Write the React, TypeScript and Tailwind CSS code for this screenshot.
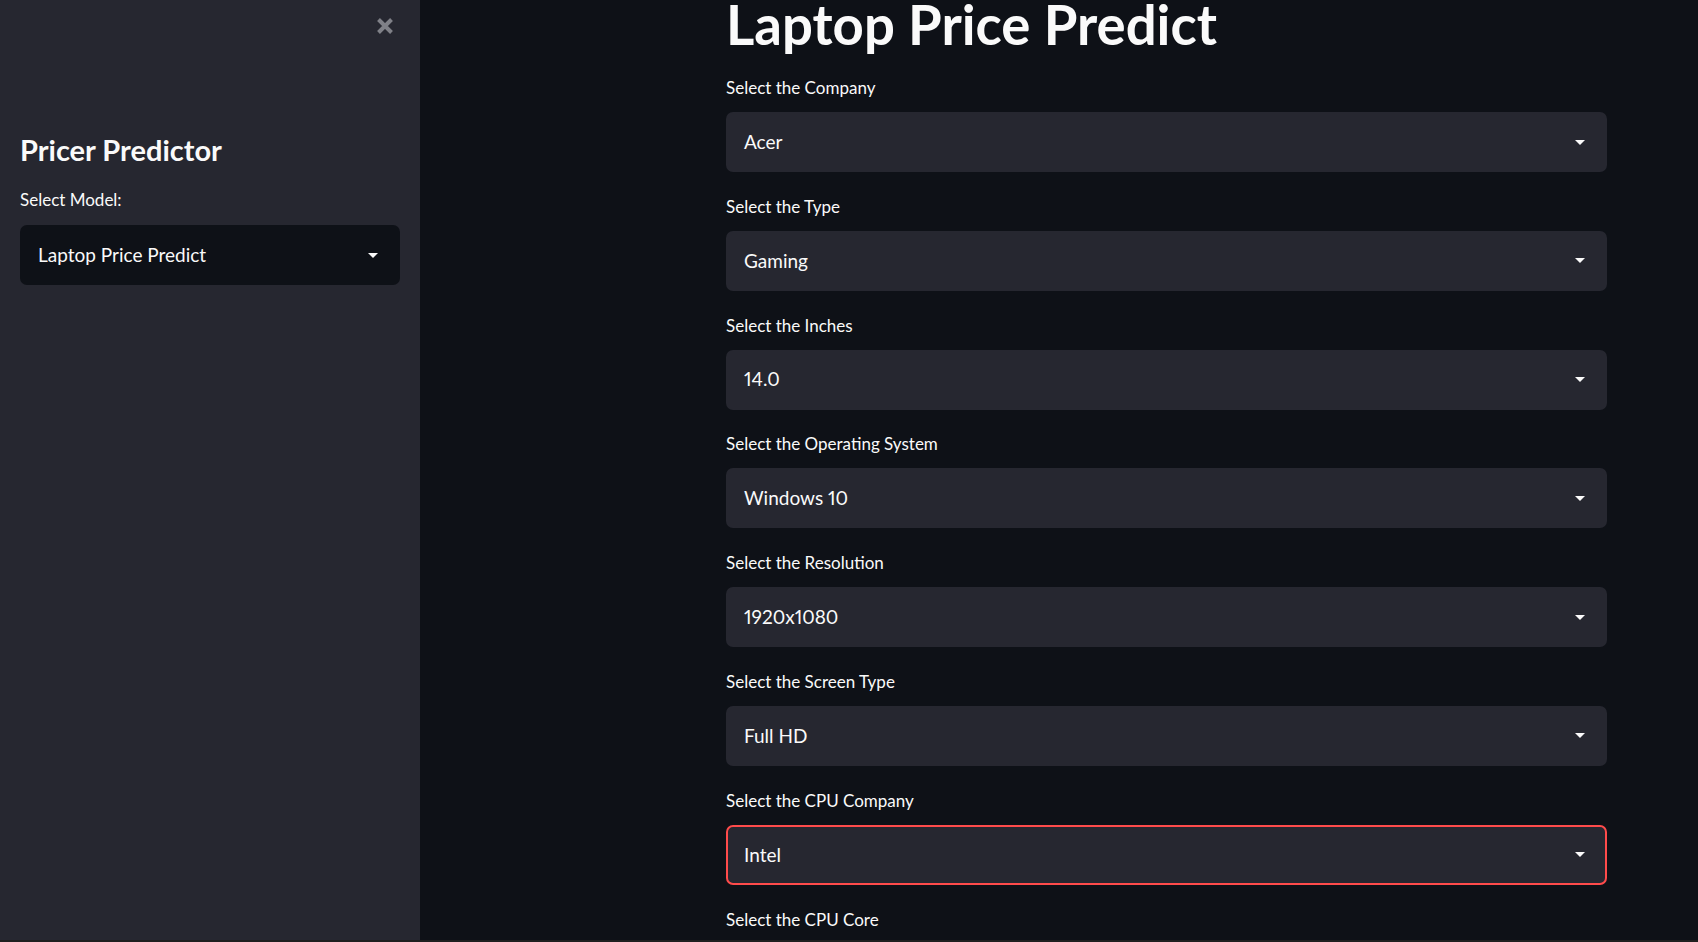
import React from 'react';

const font = { fontFamily: 'Lato, "Noto Sans", sans-serif' };

const fields = [
  { label: 'Select the Company', value: 'Acer' },
  { label: 'Select the Type', value: 'Gaming' },
  { label: 'Select the Inches', value: '14.0' },
  { label: 'Select the Operating System', value: 'Windows 10' },
  { label: 'Select the Resolution', value: '1920x1080' },
  { label: 'Select the Screen Type', value: 'Full HD' },
  { label: 'Select the CPU Company', value: 'Intel', focused: true },
  { label: 'Select the CPU Core', value: 'i5' },
];

const Caret = () => (
  <svg width="10" height="5" viewBox="0 0 10 5" className="shrink-0">
    <path d="M0 0h10L5 5z" fill="#fafafa" />
  </svg>
);

const Select: React.FC<{ value: string; dark?: boolean; focused?: boolean }> = ({ value, dark, focused }) => (
  <div
    className={`h-[60px] rounded-[7px] flex items-center justify-between text-[19px] text-[#fafafa] proportional-nums ${
      dark ? 'bg-[#0e1117]' : 'bg-[#262730]'
    } ${focused ? 'border-2 border-[#ff4b4b] pl-[16px] pr-[20px]' : 'pl-[18px] pr-[22px]'}`}
  >
    <span>{value}</span>
    <Caret />
  </div>
);

export default function App() {
  return (
    <div className="w-[1698px] h-[942px] overflow-hidden flex flex-col bg-[#0e1117]" style={font}>
      <div className="flex h-[940px] overflow-hidden">
        {/* Sidebar */}
        <aside className="w-[420px] shrink-0 bg-[#262730] px-[20px] relative">
          <button className="absolute left-[376px] top-[17px] w-[18px] h-[18px]">
            <svg width="18" height="18" viewBox="0 0 18 18">
              <path d="M2.5 2.5l13 13M15.5 2.5l-13 13" stroke="#7f8087" strokeWidth="4" />
            </svg>
          </button>
          <h2 className="pt-[130px] text-[29px] font-bold leading-[40px] text-[#fafafa]">Pricer Predictor</h2>
          <p className="mt-[18px] text-[17px] leading-[24px] text-[#fafafa]">Select Model:</p>
          <div className="mt-[13px]">
            <Select value="Laptop Price Predict" dark />
          </div>
        </aside>

        {/* Main */}
        <main className="flex-1 pl-[306px]">
          <div className="w-[881px]">
            <h1 className="text-[54.5px] font-bold leading-[48px] text-[#fafafa]">Laptop Price Predict</h1>
            <div className="mt-[28px] flex flex-col gap-[22.8px]">
              {fields.map((f) => (
                <div key={f.label} className="flex flex-col">
                  <label className="h-[24px] text-[17px] leading-[24px] text-[#fafafa] mb-[12px]">{f.label}</label>
                  <Select value={f.value} focused={f.focused} />
                </div>
              ))}
            </div>
          </div>
        </main>
      </div>
      <div className="h-[2px] bg-[#1f1f1f]" />
    </div>
  );
}
